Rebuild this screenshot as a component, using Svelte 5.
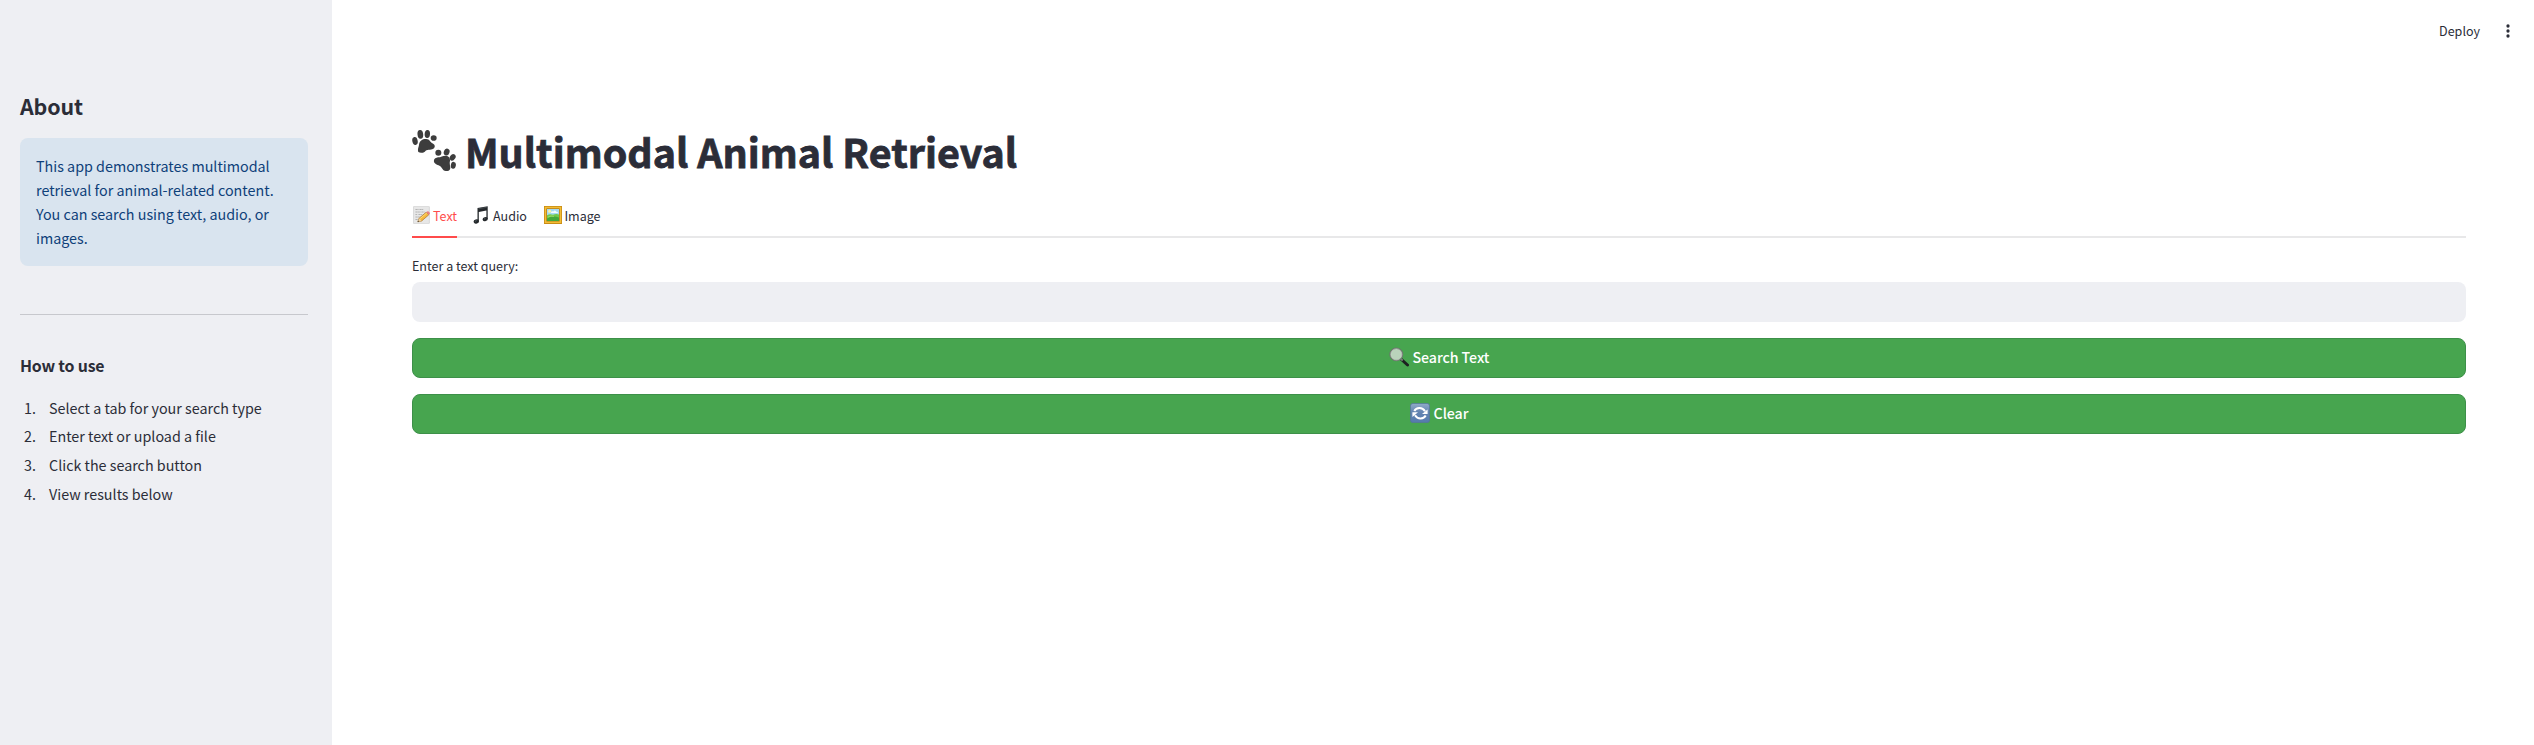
<script>
  const steps = [
    'Select a tab for your search type',
    'Enter text or upload a file',
    'Click the search button',
    'View results below'
  ];
  let active = $state('Text');
  let query = $state('');
</script>

<div class="app">
  <aside>
    <h2>About</h2>
    <div class="alert">This app demonstrates multimodal retrieval for animal-related content. You can search using text, audio, or images.</div>
    <hr />
    <h3>How to use</h3>
    <ol>
      {#each steps as step, i}
        <li><span class="num">{i + 1}.</span><span>{step}</span></li>
      {/each}
    </ol>
  </aside>

  <section>
    <header>
      <span class="deploy">Deploy</span>
      <svg class="menu" width="4" height="14" viewBox="0 0 4 14" fill="#2b2d38">
        <circle cx="2" cy="2" r="1.65" /><circle cx="2" cy="7" r="1.65" /><circle cx="2" cy="12" r="1.65" />
      </svg>
    </header>

    <main>
      <h1>
        <svg width="44" height="41" viewBox="36 30 132 123" fill="#3d3d3d">
          <ellipse cx="45" cy="63" rx="8" ry="12" transform="rotate(-12 45 63)" />
          <ellipse cx="61" cy="43" rx="8.5" ry="13" transform="rotate(-6 61 43)" />
          <ellipse cx="82" cy="42" rx="8" ry="12" transform="rotate(4 82 42)" />
          <ellipse cx="101" cy="54" rx="9" ry="8.5" />
          <path d="M54 93C53 84 57 79 57 74C58 62 69 56 79 57C89 57 90 66 97 70C104 73 107 79 102 85C97 90 83 89 77 92C73 97 69 99 63 98C58 98 54 97 54 93Z" />
          <ellipse cx="115" cy="98" rx="9" ry="9" />
          <ellipse cx="140" cy="96" rx="8.5" ry="10.5" transform="rotate(20 140 96)" />
          <ellipse cx="158" cy="112" rx="8" ry="10.5" transform="rotate(35 158 112)" />
          <ellipse cx="160" cy="136" rx="7.5" ry="10.5" transform="rotate(10 160 136)" />
          <path d="M102 125C100 117 108 113 114 112C124 112 129 106 138 107C147 108 151 115 150 123C148 130 150 136 151 143C151 151 145 154 137 153C129 153 127 144 121 139C115 134 104 133 102 125Z" />
        </svg>
        <span>Multimodal Animal Retrieval</span>
      </h1>

      <nav>
        <button class="tab" class:active={active === 'Text'} onclick={() => (active = 'Text')}>
          <svg class="memo" width="17" height="18" viewBox="0 0 17 18">
            <rect x=".4" y=".4" width="16" height="17.2" rx=".6" fill="#e7e7e7" stroke="#d0d0d0" stroke-width=".7" />
            <path d="M2.5 3.5h3m1 0h4M2.5 6h5m1 0h3M2.5 8.5h2m1 0h4M2.5 11h5M2.5 13.5h3" stroke="#a8a8a8" stroke-width=".9" stroke-dasharray="1.4 .5" />
            <path d="M4.8 15.8 6.2 12.2 13.2 6.2 15.8 8.8 8.6 15Z" fill="#f6b83c" stroke="#a8702a" stroke-width=".7" />
            <path d="M6.8 12.9 13.8 7" stroke="#ffdf75" stroke-width=".9" />
            <path d="m13.2 6.2 1-.8q1.2-.5 2.2.8t.2 2l-.8.6Z" fill="#e98080" />
            <path d="m4.8 15.8 1.4-3.6 2.4 2.8Z" fill="#ecd0a0" />
            <path d="m4.6 16 .5-1.5 1.1 1Z" fill="#333" />
          </svg>
          <span>Text</span>
        </button>
        <button class="tab" class:active={active === 'Audio'} onclick={() => (active = 'Audio')}>
          <svg class="music" width="15" height="18" viewBox="0 0 15 18" fill="#24282b">
            <path d="M4.5 2 14.7.2V13h-1.3V4.5L5.8 5.9V15.5H4.5Z" />
            <ellipse cx="3.3" cy="15.5" rx="2.7" ry="2.1" transform="rotate(-18 3.3 15.5)" />
            <ellipse cx="12.2" cy="13.2" rx="2.6" ry="2" transform="rotate(-18 12.2 13.2)" />
            <path d="M5.5 2.8 13.8 1.3" stroke="#596065" stroke-width=".6" />
            <path d="m2 15.4 1.6-.8m7.4-1.5 1.4-.7" stroke="#66747c" stroke-width=".7" />
          </svg>
          <span>Audio</span>
        </button>
        <button class="tab" class:active={active === 'Image'} onclick={() => (active = 'Image')}>
          <svg class="frame" width="18" height="18" viewBox="0 0 18 18">
            <rect width="18" height="18" fill="#c98c15" />
            <rect x=".8" y=".8" width="16.4" height="16.2" fill="#f2bd35" />
            <rect x="2.4" y="2.4" width="13.2" height="13" fill="#a66c13" />
            <rect x="3" y="3" width="12" height="12" fill="#a5daf2" />
            <circle cx="5.6" cy="5.3" r="1.5" fill="#fff3a0" />
            <path d="M7 6.4q1-1.8 2.4-.8 1.4-2 3 .1 1.5 0 1.7 1.2H7Z" fill="#f5fbff" />
            <path d="M3 9.2q3-1.6 6-.4 3-1.5 6-.4V15H3Z" fill="#71c94b" />
            <path d="M3 12.5q5-3.2 12-1V15H3Z" fill="#43a83a" />
            <path d="M4 11q3-1.6 6-.6" fill="none" stroke="#a7e069" stroke-width=".8" />
          </svg>
          <span>Image</span>
        </button>
      </nav>

      <label for="query">Enter a text query:</label>
      <input id="query" type="text" bind:value={query} />

      <button class="action">
        <svg width="20" height="20" viewBox="0 0 20 20">
          <path d="m12.5 12.5 6 5.5" stroke="#1c2020" stroke-width="3" stroke-linecap="round" />
          <path d="m11.5 11.5 2.2 2" stroke="#78817a" stroke-width="1.8" />
          <circle cx="7.3" cy="7.4" r="6.2" fill="#b9d3bb" stroke="#6c766d" stroke-width="1.5" />
          <circle cx="7.3" cy="7.4" r="5.6" fill="none" stroke="#d8e2d8" stroke-width=".5" />
        </svg>
        <span>Search Text</span>
      </button>
      <button class="action clear" onclick={() => (query = '')}>
        <svg width="20" height="20" viewBox="0 0 20 20">
          <defs>
            <linearGradient id="blue" x2="0" y2="1"><stop stop-color="#92abc9" /><stop offset=".45" stop-color="#6485b1" /><stop offset="1" stop-color="#547bad" /></linearGradient>
          </defs>
          <rect x=".4" y=".4" width="19.2" height="19.2" rx="2.6" fill="url(#blue)" stroke="#55759c" stroke-width=".8" />
          <path d="M4.3 7.9C6.2 4.4 12.2 3.6 15 8.2M15.7 12.5C13.8 16 7.8 16.8 5 12.2" fill="none" stroke="#fff" stroke-width="2" />
          <path d="M17.6 6.5v4.6h-5.6ZM2.4 13.9V9.3H8Z" fill="#fff" />
        </svg>
        <span>Clear</span>
      </button>
    </main>
  </section>
</div>

<style>
  :global(body) { margin: 0; background: #fff; }
  .app {
    display: flex;
    height: 745px;
    overflow: hidden;
    color: #2b2d38;
    font-family: "Noto Sans CJK SC", "Noto Sans", sans-serif;
    font-size: 14.32px;
    line-height: 24px;
  }
  aside {
    box-sizing: border-box;
    width: 332px;
    flex: none;
    padding: 91px 24px 0 20px;
    background: #eeeff3;
  }
  h1, h2, h3 { margin: 0; font-weight: 700; }
  h2 { font-size: 21.4px; line-height: 30px; letter-spacing: -0.1px; }
  .alert {
    margin-top: 17px;
    padding: 16px;
    border-radius: 8px;
    background: #d9e4ef;
    color: #0e4079;
  }
  hr { height: 1px; margin: 48px 0 0; border: 0; background: #c7c8cd; }
  h3 { margin-top: 39px; font-size: 15.9px; line-height: 24px; letter-spacing: -0.2px; }
  ol { margin: 16.6px 0 0; padding: 0; list-style: none; }
  li { display: flex; height: 28.8px; line-height: 26px; }
  .num { box-sizing: border-box; width: 29px; padding-left: 4px; }
  section { flex: 1; min-width: 0; }
  header {
    display: flex;
    align-items: center;
    justify-content: flex-end;
    height: 60px;
    padding-right: 24px;
    gap: 26px;
    font-size: 12.53px;
  }
  .deploy { padding-top: 2px; }
  .menu { margin-top: 2px; }
  main { display: flex; flex-direction: column; padding: 64px 68px 0 80px; }
  h1 {
    display: flex;
    align-items: center;
    height: 56px;
    gap: 9px;
    font-size: 39.4px;
    line-height: 54px;
  }
  h1 svg { margin-top: -3px; }
  h1 span { margin-top: -2px; white-space: nowrap; -webkit-text-stroke: 0.8px currentColor; }
  button { font-family: inherit; cursor: pointer; }
  nav {
    display: flex;
    gap: 16px;
    height: 40px;
    margin-top: 18px;
    box-shadow: inset 0 -2px #e8e8e9;
  }
  .tab {
    display: flex;
    align-items: center;
    padding: 0 0 3px;
    border: 0;
    border-bottom: 2px solid transparent;
    background: none;
    color: inherit;
    font-size: 12.53px;
    line-height: 22px;
  }
  .tab.active { border-color: #ff4b4b; color: #ff4b4b; }
  .tab svg { margin: -1px 3px 0 0; }
  .tab .memo { margin-left: 1px; }
  .tab .music { margin-right: 5px; }
  .tab .frame { margin-right: 2.5px; }
  .tab:nth-child(3) { margin-left: 1px; }
  label { height: 24px; margin-top: 16px; font-size: 12.53px; line-height: 24px; }
  input {
    height: 40px;
    margin-top: 4px;
    box-sizing: border-box;
    border: 0;
    border-radius: 8px;
    outline: 0;
    padding: 0 12px;
    background: #eeeff3;
    font: inherit;
  }
  .action {
    display: flex;
    align-items: center;
    justify-content: center;
    gap: 4px;
    height: 40px;
    margin-top: 16px;
    padding: 0;
    border: 1px solid #3d9049;
    border-radius: 8px;
    background: #47a54f;
    color: #fff;
    font-size: 14.2px;
    font-weight: 500;
    line-height: 24px;
    letter-spacing: -0.08px;
  }
  .action svg { margin-top: -2px; }
  .action span { margin-top: -2px; }
</style>
